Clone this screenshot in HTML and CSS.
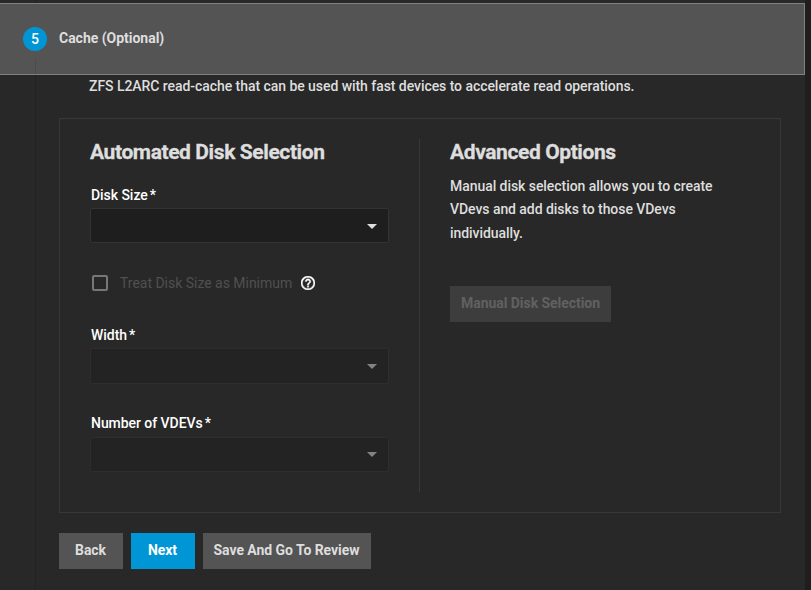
FILE: index.html
```
<!DOCTYPE html>
<html lang="en">
<head>
<meta charset="utf-8">
<title>Pool Creation Wizard</title>
<link rel="stylesheet" href="styles.css">
</head>
<body>
<main class="panel">
  <header class="step-header">
    <span class="step-number">5</span>
    <span class="step-title">Cache (Optional)</span>
  </header>
  <section class="step-body">
    <p class="description">ZFS L2ARC read-cache that can be used with fast devices to accelerate read operations.</p>
    <div class="card">
      <div class="column automated">
        <h2>Automated Disk Selection</h2>
        <div class="field size-field">
          <div class="label">Disk Size<span class="required">*</span></div>
          <div class="select"><svg class="arrow" viewBox="0 0 10 5"><path d="M0 0h10L5 5z"/></svg></div>
        </div>
        <div class="check-row">
          <span class="checkbox"></span>
          <span class="check-label">Treat Disk Size as Minimum</span>
          <svg class="help" viewBox="2 2 20 20"><path d="M11 18h2v-2h-2v2zm1-16C6.48 2 2 6.48 2 12s4.48 10 10 10 10-4.48 10-10S17.52 2 12 2zm0 18c-4.41 0-8-3.59-8-8s3.59-8 8-8 8 3.59 8 8-3.59 8-8 8zm0-14c-2.21 0-4 1.79-4 4h2c0-1.1.9-2 2-2s2 .9 2 2c0 2-3 1.75-3 5h2c0-2.25 3-2.5 3-5 0-2.21-1.79-4-4-4z"/></svg>
        </div>
        <div class="field width-field">
          <div class="label">Width<span class="required">*</span></div>
          <div class="select disabled"><svg class="arrow" viewBox="0 0 10 5"><path d="M0 0h10L5 5z"/></svg></div>
        </div>
        <div class="field vdev-field">
          <div class="label">Number of VDEVs<span class="required">*</span></div>
          <div class="select disabled"><svg class="arrow" viewBox="0 0 10 5"><path d="M0 0h10L5 5z"/></svg></div>
        </div>
      </div>
      <div class="column advanced">
        <h2>Advanced Options</h2>
        <p class="help-text">Manual disk selection allows you to create<br>VDevs and add disks to those VDevs<br>individually.</p>
        <button class="button manual" disabled>Manual Disk Selection</button>
      </div>
    </div>
    <div class="actions">
      <button class="button back">Back</button>
      <button class="button next">Next</button>
      <button class="button review">Save And Go To Review</button>
    </div>
  </section>
</main>
</body>
</html>
```
FILE: styles.css
```
* { box-sizing: border-box; }
body {
  margin: 0;
  height: 590px;
  overflow: hidden;
  background: #1e1e1e;
  color: #dedede;
  font: 500 14px/20px Roboto, sans-serif;
  letter-spacing: -.055px;
}
h2, p { margin: 0; white-space: nowrap; }
.panel {
  width: 805px;
  height: 590px;
  padding-top: 3px;
  background: linear-gradient(#232323, #232323) 35px 0 / 1px 100% no-repeat, #282828;
}
.step-header {
  display: flex;
  align-items: center;
  height: 72px;
  padding-left: 23px;
  border: 1px solid #808080;
  border-left: 0;
  background: linear-gradient(#4c4c4c, #4c4c4c) 35px 55px / 1px 15px no-repeat, #545454;
}
.step-number {
  width: 24px;
  height: 24px;
  margin-right: 12px;
  border-radius: 50%;
  background: #0095d5;
  color: #fff;
  text-align: center;
  line-height: 24px;
}
.step-title { line-height: 24px; margin-top: -2px; font-weight: 700; letter-spacing: -.02px; }
.step-body { padding: 1px 24px 0 59px; }
.description { padding-left: 30px; }
.card {
  display: flex;
  width: 722px;
  height: 395px;
  margin-top: 22px;
  padding: 20px 30px;
  border: 1px solid #383838;
}
.column { height: 353px; }
.automated { width: 330px; border-right: 1px solid #383838; }
.advanced { padding-left: 30px; }
h2 {
  font: 700 21px/26px Roboto, sans-serif;
  letter-spacing: -.4px;
  -webkit-text-stroke: .3px #dedede;
}
.field { width: 299px; }
.size-field { margin-top: 20px; }
.label {
  height: 23px;
  padding-left: 1px;
  color: #fff;
  letter-spacing: -.05px;
}
.required { margin-left: 2px; }
.select {
  display: flex;
  align-items: center;
  justify-content: flex-end;
  height: 35px;
  padding: 1px 11px 0 0;
  border: 1px solid #333;
  border-radius: 2px;
  background: #1e1e1e;
}
.select.disabled { border-color: #2e2e2e; background: #232323; }
.arrow { width: 10px; height: 5px; fill: #dedede; }
.disabled .arrow { fill: #838383; }
.check-row { display: flex; align-items: center; height: 20px; margin-top: 30px; }
.checkbox {
  width: 16px;
  height: 16px;
  margin: 0 12px 0 2px;
  border: 2px solid #777;
  border-radius: 2px;
}
.check-label { width: 172px; color: #505050; font-weight: 400; letter-spacing: -.02px; white-space: nowrap; }
.help { width: 14px; height: 14px; margin-left: 9px; fill: #fff; stroke: #fff; stroke-width: .6; }
.width-field { margin-top: 32px; }
.width-field .select { height: 36px; padding-top: 0; }
.vdev-field { margin-top: 29px; }
.vdev-field .label { height: 24px; }
.vdev-field .select { padding-top: 0; }
.help-text { margin-top: 9.5px; line-height: 23.5px; }
.button {
  height: 36px;
  padding: 0 1px 1px 0;
  border: 0;
  background: #545454;
  color: #dedede;
  font: 700 14px/35px Roboto, sans-serif;
  letter-spacing: -.05px;
  white-space: nowrap;
}
.manual { width: 161px; margin-top: 40.5px; padding-right: 0; background: #3d3d3d; color: #616161; }
.actions { display: flex; gap: 8px; margin-top: 20px; }
.back, .next { width: 64px; }
.next { background: #0095d5; color: #fff; }
.review { width: 168px; }
```
